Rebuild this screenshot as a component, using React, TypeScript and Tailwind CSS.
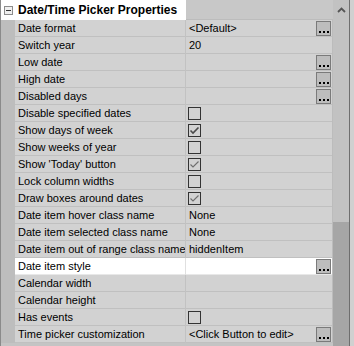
import React from "react";

type Row = {
  name: string;
  value?: string;
  check?: "on" | "off" | "onLight";
  btn?: boolean;
  selected?: boolean;
};

const rows: Row[] = [
  { name: "Date format", value: "<Default>", btn: true },
  { name: "Switch year", value: "20" },
  { name: "Low date", btn: true },
  { name: "High date", btn: true },
  { name: "Disabled days", btn: true },
  { name: "Disable specified dates", check: "off" },
  { name: "Show days of week", check: "on" },
  { name: "Show weeks of year", check: "off" },
  { name: "Show 'Today' button", check: "onLight" },
  { name: "Lock column widths", check: "off" },
  { name: "Draw boxes around dates", check: "onLight" },
  { name: "Date item hover class name", value: "None" },
  { name: "Date item selected class name", value: "None" },
  { name: "Date item out of range class name", value: "hiddenItem" },
  { name: "Date item style", btn: true, selected: true },
  { name: "Calendar width" },
  { name: "Calendar height" },
  { name: "Has events", check: "off" },
  { name: "Time picker customization", value: "<Click Button to edit>", btn: true },
];

function Ellipsis() {
  return (
    <div className="absolute right-px top-px w-[15px] h-[15px] border border-[#7a7a7a] bg-[#bdbdbd] flex items-end justify-center gap-[2px] pb-[2px]">
      <div className="w-[2px] h-[2px] bg-black" />
      <div className="w-[2px] h-[2px] bg-black" />
      <div className="w-[2px] h-[2px] bg-black" />
    </div>
  );
}

function Check({ state }: { state: "on" | "off" | "onLight" }) {
  return (
    <div className="w-[13px] h-[13px] border border-[#333333] flex items-center justify-center">
      {state !== "off" && (
        <svg width="11" height="11" viewBox="0 0 11 11">
          <polyline
            points="1.5,5.5 4,8 9.5,2.5"
            fill="none"
            stroke={state === "on" ? "#4a4a4a" : "#6e6e6e"}
            strokeWidth={state === "on" ? 1.6 : 1.1}
          />
        </svg>
      )}
    </div>
  );
}

export default function App() {
  return (
    <div
      className="w-[354px] h-[346px] flex overflow-hidden bg-[#c4c4c4] text-black"
      style={{ fontFamily: '"Liberation Sans", Arial, sans-serif' }}
    >
      <div className="w-[333px] flex flex-col border-l border-[#8a8a8a]">
        {/* header */}
        <div className="h-[20px] flex shrink-0">
          <div className="w-[185px] bg-white flex items-center">
            <div className="w-[14px] flex justify-center items-center">
              <div className="w-[9px] h-[9px] border border-[#8c8c8c] bg-[#f0f0f0] flex items-center justify-center">
                <div className="w-[5px] h-px bg-[#333333]" />
              </div>
            </div>
            <span className="pl-[3px] text-[12px] font-bold leading-none whitespace-nowrap">
              Date/Time Picker Properties
            </span>
          </div>
          <div className="flex-1 bg-[#c8c8c8] border-b border-[#bcbcbc]" />
        </div>
        {rows.map((r, i) => (
          <div key={i} className="h-[17px] flex shrink-0">
            <div className="w-[14px] bg-[#bdbdbd]" />
            <div
              className={`w-[170px] border-b flex items-center pl-[3px] text-[11px] whitespace-nowrap overflow-hidden ${
                r.selected ? "bg-white border-[#e8e8e8]" : "bg-[#d2d2d2] border-[#c0c0c0]"
              }`}
            >
              {r.name}
            </div>
            <div className={`w-px ${r.selected ? "bg-[#e0e0e0]" : "bg-[#c2c2c2]"}`} />
            <div
              className={`relative flex-1 border-b flex items-center text-[11px] whitespace-nowrap ${
                r.selected ? "bg-white border-[#e8e8e8]" : "bg-[#d2d2d2] border-[#c0c0c0]"
              } ${r.check ? "pl-[2px]" : "pl-[3px]"}`}
            >
              {r.check ? <Check state={r.check} /> : r.value}
              {r.btn && <Ellipsis />}
            </div>
            <div className="w-px bg-[#bcbcbc]" />
          </div>
        ))}
      </div>
      {/* scrollbar */}
      <div className="w-[16px] flex flex-col bg-[#c2c2c2]">
        <div className="h-[20px] flex items-center justify-center shrink-0">
          <svg width="9" height="6" viewBox="0 0 9 6">
            <polyline points="1,5 4.5,1.5 8,5" fill="none" stroke="#555555" strokeWidth="1.8" />
          </svg>
        </div>
        <div className="h-[202px] shrink-0" />
        <div className="flex-1 bg-[#a6a6a6]" />
      </div>
      <div className="w-px bg-[#6e6e6e]" />
      <div className="flex-1 bg-[#d0d0d0]" />
    </div>
  );
}
